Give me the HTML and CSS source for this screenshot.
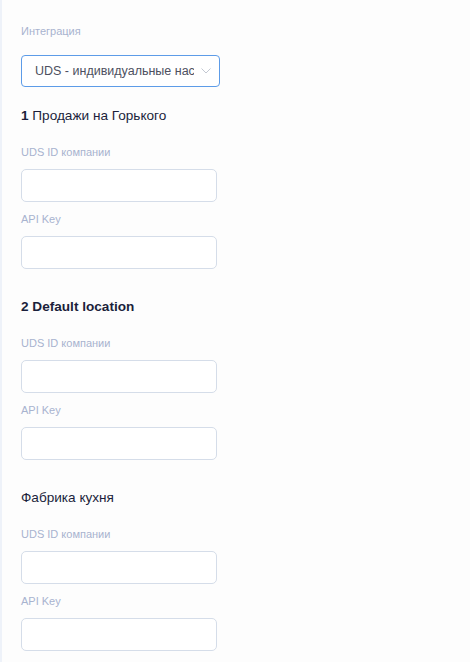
FILE: index.html
```html
<!DOCTYPE html>
<html lang="en">
<head>
    <meta charset="UTF-8">
    <meta name="viewport" content="width=device-width, initial-scale=1.0">
    <title>Интеграция</title>
    <link rel="stylesheet" href="styles.css">
</head>
<body>

    <div class="panel">
        <label class="field-label top-label">Интеграция</label>
        <div class="select">
            <span class="select-value">UDS - индивидуальные наст</span>
            <svg class="chevron" width="10" height="6" viewBox="0 0 10 6">
                <path d="M0.5 0.5 L5 5 L9.5 0.5" fill="none" stroke="#c3c8d2" stroke-width="1"/>
            </svg>
        </div>

        <div class="section">
            <h3 class="section-title"><b>1</b> Продажи на Горького</h3>
            <label class="field-label">UDS ID компании</label>
            <input class="field-input" type="text">
            <label class="field-label">API Key</label>
            <input class="field-input" type="text">
        </div>

        <div class="section">
            <h3 class="section-title bold">2 Default location</h3>
            <label class="field-label">UDS ID компании</label>
            <input class="field-input" type="text">
            <label class="field-label">API Key</label>
            <input class="field-input" type="text">
        </div>

        <div class="section">
            <h3 class="section-title">Фабрика кухня</h3>
            <label class="field-label">UDS ID компании</label>
            <input class="field-input" type="text">
            <label class="field-label">API Key</label>
            <input class="field-input" type="text">
        </div>
    </div>

</body>
</html>
```

FILE: styles.css
```css
* {
    margin: 0;
    padding: 0;
    box-sizing: border-box;
}
body {
    font-family: "Liberation Sans", Arial, sans-serif;
    background-color: #fdfdfd;
    color: #1b1f3b;
    min-height: 100vh;
}
.panel {
    min-height: 100vh;
    border-left: 2px solid #eef2f9;
    padding: 24px 0 0 19px;
    display: flex;
    flex-direction: column;
}
.field-label {
    display: block;
    font-size: 11px;
    line-height: 14px;
    color: #a8b3cf;
    margin-top: 10px;
}
.top-label {
    margin-top: 0;
}
.select {
    width: 199px;
    height: 32px;
    margin-top: 17px;
    border: 1px solid #5d9ce8;
    border-radius: 4px;
    background: #fff;
    display: flex;
    align-items: center;
    padding: 0 8px 0 13px;
    gap: 7px;
}
.select-value {
    flex: 1;
    overflow: hidden;
    white-space: nowrap;
    font-size: 12.5px;
    color: #4d5060;
}
.chevron {
    flex: none;
}
.section {
    display: flex;
    flex-direction: column;
    margin-top: 19px;
}
.section + .section {
    margin-top: 28px;
}
.section-title {
    font-size: 13.6px;
    line-height: 20px;
    font-weight: normal;
    color: #1b1f3b;
    margin-bottom: 9px;
}
.section-title.bold {
    font-weight: bold;
}
.field-input {
    width: 196px;
    height: 33px;
    margin-top: 10px;
    border: 1px solid #d5dde9;
    border-radius: 5px;
    background: #fff;
    font-size: 13px;
    padding: 0 10px;
}
```
